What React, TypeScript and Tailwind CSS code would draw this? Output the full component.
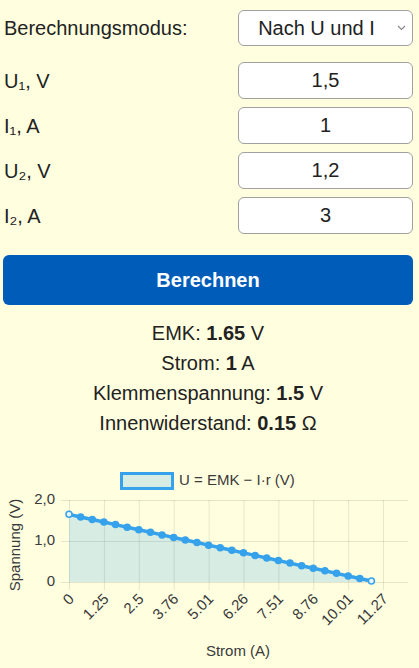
import React from 'react';

const rows = [
  { label: 'U₁, V', value: '1,5' },
  { label: 'I₁, A', value: '1' },
  { label: 'U₂, V', value: '1,2' },
  { label: 'I₂, A', value: '3' },
];

const xLabels = ['0', '1.25', '2.5', '3.76', '5.01', '6.26', '7.51', '8.76', '10.01', '11.27'];

const X0 = 69;
const STEP = 11.632;
const Y0 = 122;
const PER_V = 41;
const INK = '#3a3a3a';

function Chart() {
  const pts = Array.from({ length: 27 }, (_, i) => {
    const u = 1.65 - 0.15 * i * 0.41728;
    return [X0 + i * STEP, Y0 - Math.max(u, 0) * PER_V];
  });
  const line = pts.map(([x, y]) => `${x},${y}`).join(' ');
  const last = pts[pts.length - 1];
  const area = `${line} ${last[0]},${Y0} ${X0},${Y0}`;

  return (
    <svg width="419" height="208" viewBox="0 0 419 208" className="block" style={{ fontFamily: '"Liberation Sans", Arial, sans-serif' }}>
      {/* legend */}
      <rect x="121.5" y="13.5" width="51" height="15" fill="rgba(54,162,235,0.2)" stroke="#36a2eb" strokeWidth="3" />
      <text x="179" y="21" fontSize="15" fill={INK} dominantBaseline="middle">U = EMK − I·r (V)</text>

      {/* grid */}
      {[40, 81, 122].map((y) => (
        <line key={y} x1="61" x2="408" y1={y + 0.5} y2={y + 0.5} stroke="rgba(0,0,0,0.1)" />
      ))}
      {xLabels.map((_, k) => {
        const x = X0 + k * STEP * 3;
        return <line key={k} x1={x + 0.5} x2={x + 0.5} y1="40" y2="130" stroke="rgba(0,0,0,0.1)" />;
      })}

      {/* y ticks */}
      {[
        ['2,0', 40],
        ['1,0', 81],
        ['0', 122],
      ].map(([t, y]) => (
        <text key={t} x="55" y={y} fontSize="15" fill={INK} textAnchor="end" dominantBaseline="middle">
          {t}
        </text>
      ))}
      <text x="16" y="85" fontSize="15" fill={INK} textAnchor="middle" dominantBaseline="middle" transform="rotate(-90 16 85)">
        Spannung (V)
      </text>

      {/* x ticks */}
      {xLabels.map((t, k) => {
        const x = X0 + k * STEP * 3 + 3;
        const y = 137;
        return (
          <text key={t} x={x} y={y} fontSize="15" fill={INK} textAnchor="end" dominantBaseline="middle" transform={`rotate(-45 ${x} ${y})`}>
            {t}
          </text>
        );
      })}
      <text x="238" y="192" fontSize="15" fill={INK} textAnchor="middle" dominantBaseline="middle">
        Strom (A)
      </text>

      {/* data */}
      <polygon points={area} fill="rgba(54,162,235,0.2)" />
      <polyline points={line} fill="none" stroke="#36a2eb" strokeWidth="3.5" strokeLinejoin="round" />
      {pts.map(([x, y], i) => {
        const hollow = i === 0 || i === pts.length - 1;
        return (
          <circle
            key={i}
            cx={x}
            cy={y}
            r="3"
            fill={hollow ? '#e8f4fb' : '#36a2eb'}
            stroke="#36a2eb"
            strokeWidth="1.5"
          />
        );
      })}
    </svg>
  );
}

export default function App() {
  return (
    <div className="min-h-screen bg-[#ffffe0] text-[#222] font-['Liberation_Sans',Arial,sans-serif]">
      <div className="pl-[3px] pr-[6px] pt-[10px]">
        <div className="flex items-center justify-between h-[36px] mb-[16px]">
          <label className="text-[20px] pl-[1px]">Berechnungsmodus:</label>
          <div className="relative w-[175px] h-[36px]">
            <select
              defaultValue="uI"
              className="appearance-none w-full h-full bg-white border border-[#a0a0a0] rounded-[6px] text-[20px] text-[#222] pr-[18px] [text-align-last:center] outline-none"
            >
              <option value="uI">Nach U und I</option>
            </select>
            <svg className="absolute right-[7px] top-[15px] pointer-events-none" width="9" height="6" viewBox="0 0 9 6">
              <path d="M1 1l3.5 3.5L8 1" fill="none" stroke="#888" strokeWidth="1.2" />
            </svg>
          </div>
        </div>

        {rows.map((r) => (
          <div key={r.label} className="flex items-center justify-between h-[37px] mb-[8px]">
            <label className="text-[20px] pl-[1px]">{r.label}</label>
            <input
              readOnly
              value={r.value}
              className="w-[175px] h-[37px] bg-white border border-[#a0a0a0] rounded-[6px] text-[20px] text-center text-[#222] outline-none"
            />
          </div>
        ))}

        <button className="mt-[13px] w-full h-[50px] bg-[#005cb9] rounded-[6px] text-white text-[20px] font-bold">
          Berechnen
        </button>

        <div className="mt-[13px] text-center text-[20px] leading-[30px]">
          <p>
            EMK: <b>1.65</b> V
          </p>
          <p>
            Strom: <b>1</b> A
          </p>
          <p>
            Klemmenspannung: <b>1.5</b> V
          </p>
          <p>
            Innenwiderstand: <b>0.15</b> Ω
          </p>
        </div>
      </div>

      <div className="mt-[22px]">
        <Chart />
      </div>
    </div>
  );
}
